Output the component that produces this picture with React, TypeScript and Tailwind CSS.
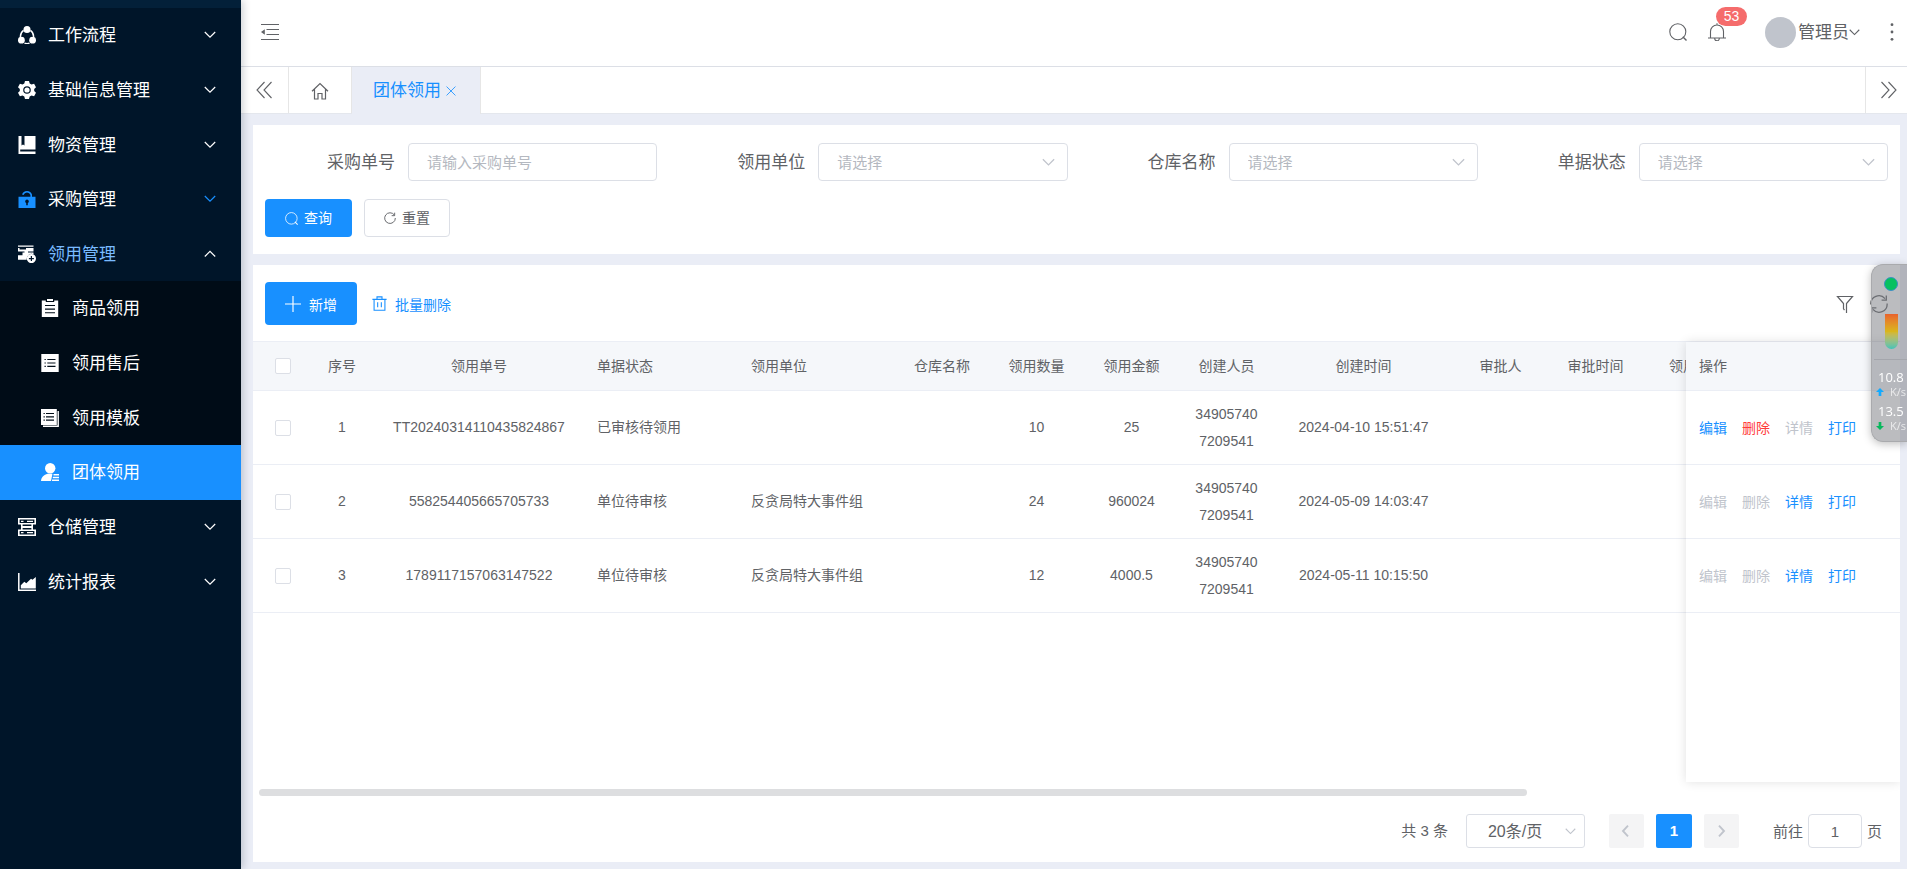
import { useState } from "react";
import type { ReactNode } from "react";
import clsx from "clsx";

function Svg({ children, className = "h-[18px] w-[18px]" }: { children: ReactNode; className?: string }) {
  return (
    <svg viewBox="0 0 18 18" className={clsx("shrink-0", className)} fill="none" stroke="currentColor" strokeWidth="1.1" aria-hidden="true">
      {children}
    </svg>
  );
}

function Chevron({ up, className = "h-3 w-3" }: { up?: boolean; className?: string }) {
  return (
    <svg viewBox="0 0 12 12" className={clsx("shrink-0", className)} fill="none" stroke="currentColor" strokeWidth="1.2" aria-hidden="true">
      <path d={up ? "M.8 8.5 6 3.3l5.2 5.2" : "M.8 3 6 8.2 11.2 3"} />
    </svg>
  );
}

const icons: Record<string, ReactNode> = {
  flow: (
    <Svg>
      <g fill="currentColor" stroke="none">
        <circle cx="9" cy="3.5" r="3.5" />
        <circle cx="3.4" cy="14.2" r="3.4" />
        <circle cx="14.6" cy="14.2" r="3.4" />
      </g>
      <path strokeWidth="1.4" d="M5.6 4.4A7.6 7.6 0 0 0 2.4 11M12.4 4.400a7.600 7.600 0 0 1 3.200 6.600M6.500 17.200a8 8 0 0 0 5 0" />
    </Svg>
  ),
  gear: (
    <Svg>
      <path
        fill="currentColor"
        stroke="none"
        fillRule="evenodd"
        d="M7 0h4l.7 2.6 1.8 1 2.6-.8 1.9 3.4L16.2 8v2l1.8 1.8-1.900 3.400-2.600-.8-1.800 1L11 18H7l-.7-2.600-1.800-1-2.600.8L0 11.800 1.800 10V8L0 6.200l1.900-3.400 2.600.8 1.800-1zM9 5.200a3.800 3.800 0 1 0 0 7.600 3.800 3.800 0 0 0 0-7.600z"
      />
      <circle cx="9" cy="9" r="2.600" fill="currentColor" stroke="none" />
    </Svg>
  ),
  book: (
    <Svg>
      <path fill="currentColor" stroke="none" fillRule="evenodd" d="M.5 0h3v9.500l1.500-1 1.500 1V0h11v13.500H2.200v2h15.300V18H.5z" />
    </Svg>
  ),
  lock: (
    <Svg>
      <path d="M4.800 4.800a4.400 4.400 0 0 1 8.400 0V7" strokeWidth="1.600" />
      <path
        fill="currentColor"
        stroke="none"
        fillRule="evenodd"
        d="M.5 6.800h17V18H.5zM9 9.400a1.900 1.900 0 0 0-.8 3.600v2.200h1.600V13A1.900 1.900 0 0 0 9 9.400z"
      />
    </Svg>
  ),
  receive: (
    <Svg>
      <path
        fill="currentColor"
        stroke="none"
        fillRule="evenodd"
        d="M0 .5h15.500v1.200H0zM0 3h1.500v1.600H8V3h7.500v3.500H10v1h5.500v1.700A5 5 0 0 0 8.800 14.800H0v-4.600h4.500V7.500h2V6.500H0z"
      />
      <path
        fill="currentColor"
        stroke="none"
        fillRule="evenodd"
        d="M13.400 9a4.600 4.600 0 1 0 0 9.200 4.600 4.600 0 0 0 0-9.200zm-.6 2.100H14V13h1.900v1.200H14v1.900h-1.200v-1.900h-1.900V13h1.900z"
      />
    </Svg>
  ),
  clipboard: (
    <Svg>
      <path fill="currentColor" stroke="none" fillRule="evenodd" d="M.8 1.500h4V3h8.400V1.500h4V18H.8zM6 0h6v2H6zM4 6v1.100h10V6zm0 3.600v1.100h10V9.600zm0 3.600v1.100h10v-1.100z" />
    </Svg>
  ),
  list: (
    <Svg>
      <path
        fill="currentColor"
        stroke="none"
        fillRule="evenodd"
        d="M.3 0h17.400v18H.3zM3.500 5v1.100h1.300V5zm2.800 0v1.100h8.200V5zM3.500 8.400v1.100h1.300V8.400zm2.800 0v1.100h8.200V8.400zM3.500 11.800v1.100h1.300v-1.100zm2.800 0v1.100h8.200v-1.100z"
      />
    </Svg>
  ),
  stack: (
    <Svg>
      <path
        fill="currentColor"
        stroke="none"
        fillRule="evenodd"
        d="M0 0h15.800v16H0zM2.500 4v1.100h1.300V4zM5 4v1.100h8V4zM2.500 7.300v1.100h1.300V7.300zm2.500 0v1.100h8V7.300zm-2.500 3.300v1.100h1.300v-1.100zm2.500 0v1.100h8v-1.100z"
      />
      <path d="M17.200 2v15.300H2" strokeWidth="1.400" />
    </Svg>
  ),
  group: (
    <Svg>
      <g fill="currentColor" stroke="none">
        <circle cx="9.200" cy="5.200" r="5.200" />
        <path d="M0 18c.3-3.800 3-6.400 6.500-7.200h5L10 18z" />
      </g>
      <path strokeWidth="1.400" d="M12.500 11.800H18M11.800 14.500H18M11 17.200h7" />
    </Svg>
  ),
  storage: (
    <Svg>
      <path
        fill="currentColor"
        stroke="none"
        fillRule="evenodd"
        d="M0 0h18v6.500h-3v5h3V18H0v-6.500h3v-5H0zM1.600 1.600V5h14.800V1.600zM1.600 13v3.400h14.800V13zM4.600 6.500V8h8.800V6.500zm0 3.500v1.500h8.800V10z"
      />
      <path strokeWidth="1.300" d="M3 3.300h2.500M9 3.300h6M3 14.700h2.500M9 14.700h6" />
    </Svg>
  ),
  chart: (
    <Svg>
      <path d="M.8 0v17.200H18" strokeWidth="1.500" />
      <path fill="currentColor" stroke="none" d="M2.800 15.600v-3.400l3.500-3.400 2 1.400L13 5.800l1.500 1L17.800 4v11.600z" />
    </Svg>
  ),
};

type MenuItem = { label: string; icon: string; kind?: "sub" | "active" | "open"; tint?: boolean };

const menu: MenuItem[] = [
  { label: "工作流程", icon: "flow" },
  { label: "基础信息管理", icon: "gear" },
  { label: "物资管理", icon: "book" },
  { label: "采购管理", icon: "lock", tint: true },
  { label: "领用管理", icon: "receive", kind: "open" },
  { label: "商品领用", icon: "clipboard", kind: "sub" },
  { label: "领用售后", icon: "list", kind: "sub" },
  { label: "领用模板", icon: "stack", kind: "sub" },
  { label: "团体领用", icon: "group", kind: "active" },
  { label: "仓储管理", icon: "storage" },
  { label: "统计报表", icon: "chart" },
];

function Sidebar() {
  return (
    <aside className="z-10 w-[241px] shrink-0 bg-[#001529] shadow-[2px_0_8px_rgba(0,21,41,0.2)]">
      <div className="h-2 bg-[#032039]" />
      <nav className="grid h-[601px] auto-rows-fr">
        {menu.map((m) => {
          const nested = m.kind === "sub" || m.kind === "active";
          return (
            <a
              key={m.label}
              href="#"
              className={clsx(
                "flex items-center text-[17px] leading-6 text-white",
                nested ? "gap-[13px] pl-[41px]" : "gap-3 pl-[18px] pr-[25px]",
                m.kind === "sub" && "bg-[#000c17]",
                m.kind === "active" && "bg-[#1890ff]"
              )}
            >
              <span className={clsx(m.tint && "text-[#1890ff]")}>{icons[m.icon]}</span>
              <span className={clsx("flex-1 pt-0.5", m.kind === "open" && "text-[#79bbff]")}>{m.label}</span>
              {!nested && <Chevron up={m.kind === "open"} className={clsx("h-3 w-3", m.tint && "text-[#1890ff]")} />}
            </a>
          );
        })}
      </nav>
    </aside>
  );
}

function SearchIcon({ className }: { className?: string }) {
  return (
    <Svg className={className}>
      <circle cx="8.800" cy="8.800" r="8" />
      <path strokeWidth="1.400" d="m13.800 13.800 3.700 3.700" />
    </Svg>
  );
}

function Header() {
  return (
    <header className="flex h-[67px] shrink-0 items-center border-b border-[#dcdfe6] bg-white pb-0.5 pl-5 pr-1.5 text-[#606266]">
      <button aria-label="折叠菜单">
        <Svg>
          <path strokeWidth="1.200" d="M0 1.500h18M5.500 6.500H18M5.500 11.500H18M0 16.500h18" />
          <path fill="currentColor" stroke="none" d="M0 9l3.800-2.800v5.600z" />
        </Svg>
      </button>
      <div className="ml-auto flex items-center">
        <button aria-label="搜索">
          <SearchIcon />
        </button>
        <button aria-label="通知" className="relative ml-[21px]">
          <Svg>
            <path d="M0 15h18M2.500 15V8.500a6.500 6.500 0 0 1 13 0V15M9 .3V2M6.700 15.500a2.300 2.300 0 0 0 4.600 0" />
          </Svg>
          <span className="absolute -top-4 left-2 h-[19px] w-[31px] rounded-full bg-[#f56c6c] text-center text-sm leading-[19px] text-white">53</span>
        </button>
        <button className="ml-[39px] flex items-center">
          <span className="h-[31px] w-[31px] rounded-full bg-[#c0c4cc]" />
          <span className="ml-0.5 pt-0.5 text-[17px] leading-6">管理员</span>
          <Chevron className="h-[11px] w-[11px]" />
        </button>
        <button aria-label="更多" className="ml-[23px]">
          <Svg>
            <g fill="currentColor" stroke="none">
              <circle cx="9" cy="1.700" r="1.400" />
              <circle cx="9" cy="9" r="1.400" />
              <circle cx="9" cy="16.300" r="1.400" />
            </g>
          </Svg>
        </button>
      </div>
    </header>
  );
}

function TabBar() {
  return (
    <div className="flex h-[47px] shrink-0 border-b border-[#e4e7ed] bg-white text-[#606266]">
      <button aria-label="向左" className="flex w-12 items-center justify-center border-r border-[#e6e6e6] pr-0.5">
        <Svg>
          <path d="M9.500 1 2 9l7.500 8M16.500 1 9 9l7.500 8" />
        </Svg>
      </button>
      <button aria-label="首页" className="flex w-[63px] items-center justify-center border-r border-[#e6e6e6] pt-0.5">
        <Svg>
          <path strokeWidth="1.200" d="M1 9.200 9 1.500l8 7.700M3.500 7v10H7v-5.500h4V17h3.500V7" />
        </Svg>
      </button>
      <div className="-mb-px flex w-[129px] items-center border-r border-[#e6e6e6] bg-[#eaedf6] pl-[21px] text-[#1890ff]">
        <a href="#" className="text-[17px] leading-6">
          团体领用
        </a>
        <button aria-label="关闭" className="ml-[5px]">
          <Svg className="h-2.5 w-2.5">
            <path strokeWidth="1.500" d="m1 1 16 16M17 1 1 17" />
          </Svg>
        </button>
      </div>
      <button aria-label="向右" className="ml-auto flex w-[42px] items-center justify-center border-l border-[#e6e6e6] pl-1">
        <Svg>
          <path d="M1.500 1 9 9l-7.500 8M8.500 1 16 9l-7.500 8" />
        </Svg>
      </button>
    </div>
  );
}

function SelectField({ id, label }: { id: string; label: string }) {
  return (
    <div className="flex items-center gap-[13px]">
      <label htmlFor={id} className="w-[130px] shrink-0 pt-0.5 text-right text-[17px] leading-6">
        {label}
      </label>
      <div className="relative flex-1">
        <select id={id} className="h-[38px] w-full appearance-none rounded border border-[#dcdfe6] bg-white px-[18px] pt-0.5 text-[15px] text-[#b4b8c0]">
          <option>请选择</option>
        </select>
        <Chevron className="pointer-events-none absolute right-[13px] top-[13px] h-[13px] w-[13px] text-[#c0c4cc]" />
      </div>
    </div>
  );
}

function SearchForm() {
  return (
    <form className="bg-white px-3 pb-[17px] pt-[18px]" onSubmit={(e) => e.preventDefault()}>
      <div className="grid grid-cols-4 gap-[18px]">
        <div className="flex items-center gap-[13px]">
          <label htmlFor="orderNo" className="w-[130px] shrink-0 pt-0.5 text-right text-[17px] leading-6">
            采购单号
          </label>
          <input
            id="orderNo"
            placeholder="请输入采购单号"
            className="h-[38px] min-w-0 flex-1 rounded border border-[#dcdfe6] px-[18px] text-[15px] placeholder:text-[#b4b8c0]"
          />
        </div>
        <SelectField id="unit" label="领用单位" />
        <SelectField id="warehouse" label="仓库名称" />
        <SelectField id="status" label="单据状态" />
      </div>
      <div className="mt-[18px] flex gap-3 text-sm">
        <button type="submit" className="flex h-[38px] items-center gap-1.5 rounded bg-[#1890ff] px-5 text-white">
          <SearchIcon className="h-[13px] w-[13px]" />
          查询
        </button>
        <button type="reset" className="flex h-[38px] items-center gap-1.5 rounded border border-[#dcdfe6] px-[19px]">
          <Svg className="h-3 w-3">
            <path strokeWidth="1.400" d="M15.500 4.500A8 8 0 1 0 17 9M16 1v4.500h-4.500" />
          </Svg>
          重置
        </button>
      </div>
    </form>
  );
}

const columns = [
  { key: "no", title: "序号", width: "w-[58px]", align: "text-center" },
  { key: "code", title: "领用单号", width: "w-[216px]", align: "text-center" },
  { key: "status", title: "单据状态", width: "w-[154px]", align: "px-2.5 text-left" },
  { key: "unit", title: "领用单位", width: "w-[154px]", align: "px-2.5 text-left" },
  { key: "warehouse", title: "仓库名称", width: "w-[94px]", align: "text-center" },
  { key: "count", title: "领用数量", width: "w-[95px]", align: "text-center" },
  { key: "amount", title: "领用金额", width: "w-[95px]", align: "text-center" },
  { key: "creator", title: "创建人员", width: "w-[95px]", align: "px-3.5 text-center break-all" },
  { key: "createdAt", title: "创建时间", width: "w-[179px]", align: "text-center" },
  { key: "approver", title: "审批人", width: "w-[95px]", align: "text-center" },
  { key: "approvedAt", title: "审批时间", width: "w-[95px]", align: "text-center" },
  { key: "receivedAt", title: "领用时间", width: "w-[108px]", align: "text-center" },
];

const rows: Record<string, string>[] = [
  { no: "1", code: "TT20240314110435824867", status: "已审核待领用", count: "10", amount: "25", creator: "349057407209541", createdAt: "2024-04-10 15:51:47" },
  { no: "2", code: "558254405665705733", status: "单位待审核", unit: "反贪局特大事件组", count: "24", amount: "960024", creator: "349057407209541", createdAt: "2024-05-09 14:03:47" },
  { no: "3", code: "1789117157063147522", status: "单位待审核", unit: "反贪局特大事件组", count: "12", amount: "4000.5", creator: "349057407209541", createdAt: "2024-05-11 10:15:50" },
];

function Check({ label }: { label: string }) {
  return (
    <input
      type="checkbox"
      aria-label={label}
      className="mx-auto block h-4 w-4 appearance-none rounded-xs border border-[#dcdfe6] bg-white checked:border-[#1890ff] checked:bg-[#1890ff]"
    />
  );
}

function DataTable() {
  return (
    <div className="flex flex-1 text-sm">
      <div className="min-w-0 flex-1 overflow-hidden">
        <table className="w-[1498px] table-fixed border-separate border-spacing-0">
          <thead>
            <tr className="h-[49px] bg-[#f5f7fa]">
              <th className="w-[60px] border-b border-[#ebeef5]">
                <Check label="全选" />
              </th>
              {columns.map((c) => (
                <th key={c.key} className={clsx("border-b border-[#ebeef5] font-normal", c.width, c.align)}>
                  {c.title}
                </th>
              ))}
            </tr>
          </thead>
          <tbody>
            {rows.map((r) => (
              <tr key={r.no} className="h-[74px]">
                <td className="border-b border-[#ebeef5]">
                  <Check label={`选择第${r.no}行`} />
                </td>
                {columns.map((c) => (
                  <td key={c.key} className={clsx("border-b border-[#ebeef5] leading-[27px]", c.align)}>
                    {r[c.key]}
                  </td>
                ))}
              </tr>
            ))}
          </tbody>
        </table>
      </div>
      <div className="z-[1] w-[214px] shrink-0 bg-white shadow-[0_0_10px_rgba(0,0,0,0.12)]">
        <table className="w-full border-separate border-spacing-0">
          <thead>
            <tr className="h-[49px] bg-[#f5f7fa]">
              <th className="border-b border-[#ebeef5] px-[13px] text-left font-normal">操作</th>
            </tr>
          </thead>
          <tbody>
            {rows.map((r) => {
              const editable = r.no === "1";
              return (
                <tr key={r.no} className="h-[74px]">
                  <td className="border-b border-[#ebeef5] px-[13px]">
                    <div className="flex gap-[15px] text-[#1890ff]">
                      <button disabled={!editable} className="disabled:text-[#c0c4cc]">
                        编辑
                      </button>
                      <button disabled={!editable} className="text-[#ff3b3b] disabled:text-[#c0c4cc]">
                        删除
                      </button>
                      <button disabled={editable} className="disabled:text-[#c0c4cc]">
                        详情
                      </button>
                      <button>打印</button>
                    </div>
                  </td>
                </tr>
              );
            })}
          </tbody>
        </table>
      </div>
    </div>
  );
}

function Pagination() {
  const [page, setPage] = useState("1");

  return (
    <div className="mt-[18px] flex h-[34px] items-center justify-end pr-[18px] text-[15px]">
      <span>共 3 条</span>
      <div className="relative ml-[18px] w-[119px]">
        <select aria-label="每页条数" className="h-[34px] w-full appearance-none rounded-[3px] border border-[#dcdfe6] bg-white pl-[21px] pt-0.5 text-base">
          <option>20条/页</option>
        </select>
        <Chevron className="pointer-events-none absolute right-[9px] top-3 h-[11px] w-[11px] text-[#c0c4cc]" />
      </div>
      <div className="ml-6 flex gap-3">
        <button aria-label="上一页" className="flex h-[34px] w-[35px] items-center justify-center rounded-xs bg-[#f4f4f5] text-[#c0c4cc]">
          <Svg className="h-3 w-3">
            <path strokeWidth="2.800" d="M12 1 4.500 9l7.500 8" />
          </Svg>
        </button>
        <button className="h-[34px] w-9 rounded-xs bg-[#1890ff] font-bold text-white">1</button>
        <button aria-label="下一页" className="flex h-[34px] w-[35px] items-center justify-center rounded-xs bg-[#f4f4f5] text-[#c0c4cc]">
          <Svg className="h-3 w-3">
            <path strokeWidth="2.800" d="m6 1 7.500 8L6 17" />
          </Svg>
        </button>
      </div>
      <label htmlFor="jump" className="ml-[34px] pt-0.5">
        前往
      </label>
      <input
        id="jump"
        value={page}
        onChange={(e) => setPage(e.target.value)}
        className="mx-[5px] h-[34px] w-[54px] rounded border border-[#dcdfe6] text-center"
      />
      <span className="pt-0.5">页</span>
    </div>
  );
}

function Rate({ arrow, tone }: { arrow: string; tone: string }) {
  return (
    <div className="-ml-0.5 flex items-center gap-1.5 text-[11px] leading-[14px] text-white/70">
      <svg viewBox="0 0 18 18" className={clsx("h-2 w-2 shrink-0", tone)} fill="currentColor" aria-hidden="true">
        <path d={arrow} />
      </svg>
      K/s
    </div>
  );
}

function NetMonitor() {
  return (
    <div className="fixed right-0 top-[264px] z-20 h-[178px] w-9 rounded-l-xl border border-r-0 border-[#a9aaad] bg-[#77797f]/50 pt-3 text-white shadow-[0_2px_8px_rgba(0,0,0,0.25)]">
      <div className="ml-3 h-3.5 w-3.5 rounded-full border border-[#3d8fc4] bg-[#07c160]" />
      <div className="ml-[13px] mt-[23px] h-[35px] w-[13px] rounded-b-full bg-linear-to-b from-[#e8622c] via-[#d9b61c] to-[#3cc3b8]" />
      <div className="ml-0.5 mt-2.5 border-t border-[#a4a6ac]" />
      <div className="pl-1.5 pt-[9px] font-['Open_Sans',sans-serif] text-[13px] leading-4">
        <div>10.8</div>
        <Rate arrow="M9 0 18 9h-6v9H6V9H0z" tone="text-[#12aaff]" />
        <div className="pt-1">13.5</div>
        <Rate arrow="M9 18 0 9h6V0h6v9h6z" tone="text-[#07b85c]" />
      </div>
    </div>
  );
}

export default function App() {
  return (
    <div className="flex min-h-screen bg-[#eaedf6] font-['Liberation_Sans','Noto_Sans_CJK_SC',sans-serif] text-[#606266]">
      <Sidebar />
      <div className="flex min-w-0 flex-1 flex-col">
        <Header />
        <TabBar />
        <main className="flex flex-1 flex-col gap-[11px] pb-[7px] pl-3 pr-[7px] pt-[11px]">
          <SearchForm />
          <section className="flex flex-1 flex-col overflow-hidden bg-white pb-3.5">
            <div className="flex items-center border-b border-[#ebeef5] px-3 pb-4 pt-[17px] text-sm">
              <button className="flex h-[43px] items-center gap-2 rounded bg-[#1890ff] px-5 text-white">
                <Svg className="h-4 w-4">
                  <path strokeWidth="1.300" d="M9 0v18M0 9h18" />
                </Svg>
                <span className="pt-[3px]">新增</span>
              </button>
              <button className="ml-[15px] flex items-center gap-2 text-[#1890ff]">
                <Svg className="h-[15px] w-[15px]">
                  <path strokeWidth="1.300" d="M.5 4h17M6 4V1h6v3M2.500 4v13h13V4M6.800 7.500v6M11.200 7.500v6" />
                </Svg>
                <span className="pt-[3px]">批量删除</span>
              </button>
              <div className="ml-auto flex gap-4">
                <button aria-label="筛选">
                  <Svg>
                    <path strokeWidth="1.200" d="M7.500 14V8.500L1.500 1.500h15l-6 7V18M7.500 14l1 1" />
                  </Svg>
                </button>
                <button aria-label="刷新">
                  <Svg>
                    <path strokeWidth="1.300" d="M.9 9.500A8 8 0 0 1 15 3.700M17.100 8.500A8 8 0 0 1 3 14.300" />
                    <path strokeWidth="1.300" d="M16.300.5v4.700h-4.700M1.700 17.500v-4.700h4.700" />
                  </Svg>
                </button>
              </div>
            </div>
            <DataTable />
            <div className="ml-1.5 mt-[7px] h-[7px] w-[77%] rounded-full bg-[#dddee0]" />
            <Pagination />
          </section>
        </main>
      </div>
      <NetMonitor />
    </div>
  );
}
